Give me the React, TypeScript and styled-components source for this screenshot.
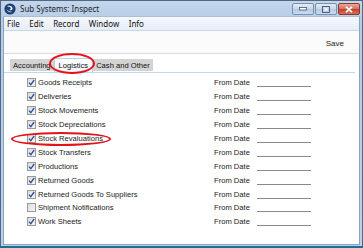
import styled, { createGlobalStyle } from "styled-components"

const GlobalStyle = createGlobalStyle`
  body {
    margin: 0;
    background: #ffffff;
    font-family: "Liberation Sans", Arial, sans-serif;
  }
`

const rows = [
  { label: "Goods Receipts", checked: true },
  { label: "Deliveries", checked: true },
  { label: "Stock Movements", checked: true },
  { label: "Stock Depreciations", checked: true },
  { label: "Stock Revaluations", checked: true },
  { label: "Stock Transfers", checked: true },
  { label: "Productions", checked: true },
  { label: "Returned Goods", checked: true },
  { label: "Returned Goods To Suppliers", checked: true },
  { label: "Shipment Notifications", checked: false },
  { label: "Work Sheets", checked: true },
]

const tabs = ["Accounting", "Logistics", "Cash and Other"]
const menus = ["File", "Edit", "Record", "Window", "Info"]

const App = () => {
  return (
    <>
      <GlobalStyle />
      <Window>
        <TitleBar>
          <AppIcon viewBox="0 0 12 12">
            <circle cx="6" cy="6" r="5.6" fill="#1d3f73" />
            <path d="M3 3.2 C5.5 2 8.8 3.2 8.6 5.6 C8.4 7.4 6 7.6 5.2 6.6 C6.6 6.8 7.4 5.6 6.6 4.6 C5.6 3.6 4 3.8 3 3.2 Z" fill="#fff" />
            <path d="M2.6 6 C3 8.6 6 10 8.6 8.6 C6.4 9.2 4 8.4 2.6 6 Z" fill="#fff" />
          </AppIcon>
          <Title>Sub Systems: Inspect</Title>
          <CaptionButtons>
            <CaptionButton>
              <svg width="8" height="4" viewBox="0 0 8 4">
                <rect x="0.5" y="0.5" width="7" height="2.5" fill="#fff" stroke="#44566e" strokeWidth="0.8" />
              </svg>
            </CaptionButton>
            <CaptionButton>
              <svg width="8" height="7" viewBox="0 0 8 7">
                <rect x="0.5" y="0.5" width="7" height="6" fill="none" stroke="#44566e" strokeWidth="0.9" />
                <rect x="2.5" y="2.5" width="3" height="2" fill="#fff" />
              </svg>
            </CaptionButton>
            <CloseButton>
              <svg width="10" height="7" viewBox="0 0 10 7">
                <path d="M2 0.8 L8 6.2 M8 0.8 L2 6.2" stroke="#fff" strokeWidth="1.8" />
              </svg>
            </CloseButton>
          </CaptionButtons>
        </TitleBar>
        <Client>
          <MenuBar>
            {menus.map((m) => (
              <MenuItem key={m}>{m}</MenuItem>
            ))}
          </MenuBar>
          <Toolbar>
            <ToolButton>Save</ToolButton>
          </Toolbar>
          <Body>
            <TabStrip>
              {tabs.map((t) => (
                <Tab key={t} $active={t === "Logistics"}>
                  {t}
                </Tab>
              ))}
            </TabStrip>
            <Panel>
              {rows.map((r) => (
                <Row key={r.label}>
                  <CheckBox $checked={r.checked}>
                    {r.checked && (
                      <svg width="7" height="7" viewBox="0 0 7 7">
                        <path d="M1 3.6 L2.8 5.6 L6.2 1" fill="none" stroke="#2b4f9c" strokeWidth="1.3" />
                      </svg>
                    )}
                  </CheckBox>
                  <Label>{r.label}</Label>
                  <FieldLabel>From Date</FieldLabel>
                  <DateField />
                </Row>
              ))}
            </Panel>
          </Body>
        </Client>
        <Highlight $x={49} $y={53} $w={46} $h={21} />
        <Highlight $x={11} $y={132} $w={100} $h={14} />
      </Window>
    </>
  )
}

const Window = styled.div`
  position: relative;
  width: 363px;
  height: 248px;
  box-sizing: border-box;
  display: flex;
  flex-direction: column;
  background: linear-gradient(#c2d6ec, #b6cde7 20px, #b9d1ea);
  border: 1px solid #55677e;
  border-bottom: 2px solid #1d6f8c;
  padding: 0 2px 1px 2px;
`

const TitleBar = styled.div`
  height: 15px;
  display: flex;
  align-items: center;
  padding-left: 1px;
`

const AppIcon = styled.svg`
  width: 12px;
  height: 12px;
  margin-right: 4px;
`

const Title = styled.div`
  font-family: "Noto Sans", "Liberation Sans", sans-serif;
  font-size: 8px;
  color: #1e1e1e;
  flex: 1;
`

const CaptionButtons = styled.div`
  display: flex;
  align-self: flex-start;
  margin-top: 2px;
  gap: 1px;
`

const CaptionButton = styled.div`
  width: 22px;
  height: 12px;
  box-sizing: border-box;
  border: 1px solid #7890ac;
  border-radius: 2px;
  background: linear-gradient(#e2ecf7, #c7d8eb 50%, #b4c9e2 51%, #c9dcf0);
  display: flex;
  align-items: center;
  justify-content: center;
`

const CloseButton = styled(CaptionButton)`
  border-color: #8b3a2f;
  background: linear-gradient(#e9a99c, #d5705f 50%, #c2402a 51%, #d7705a);
`

const Client = styled.div`
  flex: 1;
  display: flex;
  flex-direction: column;
  background: #fff;
  border: 1px solid #8aa2bf;
  border-top: 1px solid #a9bfd8;
`

const MenuBar = styled.div`
  height: 13px;
  display: flex;
  align-items: center;
  padding-left: 3px;
  background: linear-gradient(#f5f8fc, #e6edf6);
  border-bottom: 1px solid #c9d7e7;
`

const MenuItem = styled.span`
  font-family: "Noto Sans", "Liberation Sans", sans-serif;
  font-size: 8px;
  color: #111;
  margin-right: 9.5px;
`

const Toolbar = styled.div`
  height: 17px;
  display: flex;
  align-items: flex-end;
  justify-content: flex-end;
  padding: 0 15px 5px 0;
  background: #fbfbfc;
  border-bottom: 1px solid #d8dce1;
`

const ToolButton = styled.span`
  font-size: 8px;
  color: #222;
`

const Body = styled.div`
  flex: 1;
  display: flex;
  flex-direction: column;
  padding: 3px 4px 0 0;
`

const TabStrip = styled.div`
  display: flex;
  align-items: flex-end;
  height: 14px;
  border-bottom: 1px solid #c3d8ee;
  padding: 0 0 1px 6px;
`

const Tab = styled.div<{ $active?: boolean }>`
  font-size: 7.6px;
  color: #111;
  box-sizing: border-box;
  height: ${(p) => (p.$active ? "14px" : "12px")};
  margin-bottom: ${(p) => (p.$active ? "-1px" : "0")};
  display: flex;
  align-items: center;
  padding: 0 ${(p) => (p.$active ? "4px" : "2px")};
  background: ${(p) => (p.$active ? "linear-gradient(#ffffff, #eef5fc)" : "#d3d3d3")};
  border: 1px solid ${(p) => (p.$active ? "#b7d0ea" : "#d3d3d3")};
  border-bottom: none;
  border-radius: ${(p) => (p.$active ? "2px 2px 0 0" : "0")};
`

const Panel = styled.div`
  display: flex;
  flex-direction: column;
  padding: 3px 0 0 23px;
`

const Row = styled.div`
  height: 13.9px;
  display: grid;
  grid-template-columns: 9px 174px 41px 54px;
  column-gap: 2px;
  align-items: center;
`

const CheckBox = styled.div<{ $checked: boolean }>`
  width: 9px;
  height: 9px;
  box-sizing: border-box;
  border: 1px solid #9a9a9a;
  background: linear-gradient(135deg, #dcdcdc, #f6f6f6);
  display: flex;
  align-items: center;
  justify-content: center;
`

const Label = styled.span`
  font-size: 7.6px;
  color: #1a1a1a;
`

const FieldLabel = styled.span`
  font-size: 7.6px;
  color: #1a1a1a;
`

const DateField = styled.div`
  height: 8px;
  border-bottom: 1px solid #8a8a8a;
`

const Highlight = styled.div<{ $x: number; $y: number; $w: number; $h: number }>`
  position: absolute;
  left: ${(p) => p.$x - 1}px;
  top: ${(p) => p.$y - 1}px;
  width: ${(p) => p.$w}px;
  height: ${(p) => p.$h}px;
  box-sizing: border-box;
  border: 2px solid #e4121b;
  border-radius: 50%;
  pointer-events: none;
`

export default App
